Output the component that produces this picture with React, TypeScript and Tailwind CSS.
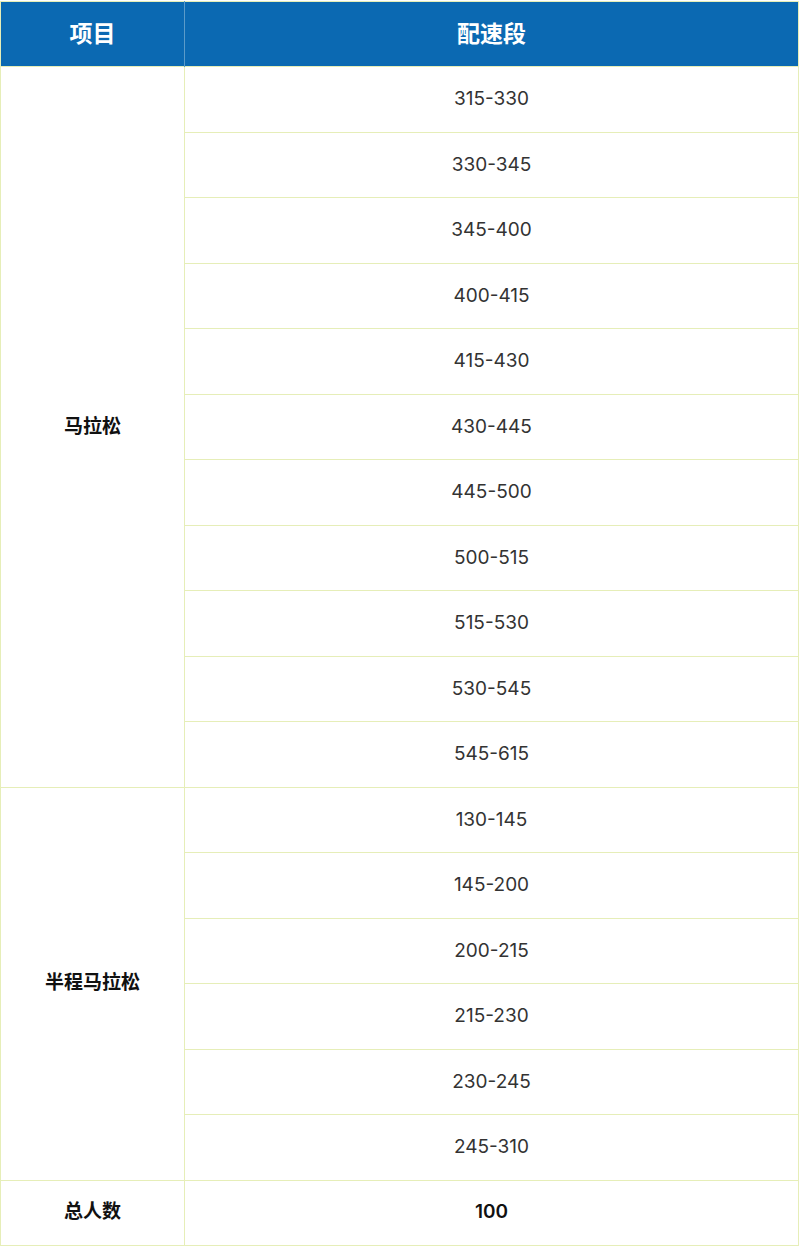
const marathon = [
  '315-330',
  '330-345',
  '345-400',
  '400-415',
  '415-430',
  '430-445',
  '445-500',
  '500-515',
  '515-530',
  '530-545',
  '545-615',
]

const half = ['130-145', '145-200', '200-215', '215-230', '230-245', '245-310']

const font = { fontFamily: '"Inter", "Noto Sans CJK SC", sans-serif' }

function Group({ label, paces }: { label: string; paces: string[] }) {
  return (
    <>
      {paces.map((p, i) => (
        <tr key={p} className="h-[65.5px]">
          {i === 0 ? (
            <td
              rowSpan={paces.length}
              className="border border-[#e6eeb8] text-center text-[19px] font-bold text-[#111]"
            >
              {label}
            </td>
          ) : null}
          <td className="border border-[#e6eeb8] text-center text-[19px] text-[#333]">{p}</td>
        </tr>
      ))}
    </>
  )
}

export default function App() {
  return (
    <div className="h-[1247px] w-[800px] bg-white pt-[1px]" style={font}>
      <table className="w-[799px] table-fixed border-collapse border border-[#e6eeb8]">
        <colgroup>
          <col className="w-[184px]" />
          <col />
        </colgroup>
        <thead>
          <tr className="h-[65px] bg-[#0b69b2] text-[23px] font-bold text-white">
            <th className="border-r border-[#5b9bc9]">项目</th>
            <th>配速段</th>
          </tr>
        </thead>
        <tbody>
          <Group label="马拉松" paces={marathon} />
          <Group label="半程马拉松" paces={half} />
          <tr className="h-[65px]">
            <td className="border border-[#e6eeb8] text-center text-[19px] font-bold text-[#111]">总人数</td>
            <td className="border border-[#e6eeb8] text-center text-[19px] font-semibold text-[#111]">100</td>
          </tr>
        </tbody>
      </table>
    </div>
  )
}
